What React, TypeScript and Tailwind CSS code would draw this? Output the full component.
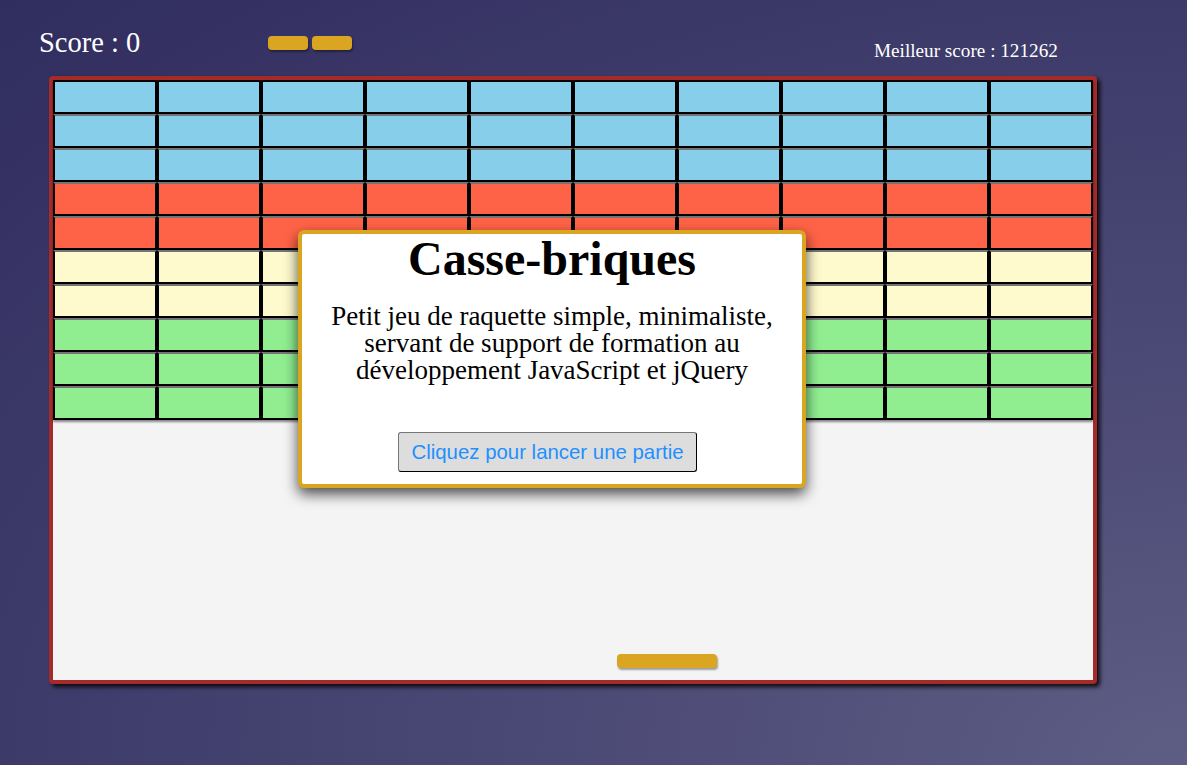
const rowColors = [
  "bg-[#87ceeb]",
  "bg-[#87ceeb]",
  "bg-[#87ceeb]",
  "bg-[#ff6347]",
  "bg-[#ff6347]",
  "bg-[#fffacd]",
  "bg-[#fffacd]",
  "bg-[#90ee90]",
  "bg-[#90ee90]",
  "bg-[#90ee90]",
];

const serif = "font-['Liberation_Serif','Times_New_Roman',serif]";

function Brick({ color, first }: { color: string; first: boolean }) {
  return (
    <div
      className={`h-[34px] w-[104px] border-2 border-black ${color} ${
        first ? "" : "border-t-[#747474]"
      }`}
    />
  );
}

function Life() {
  return <div className="h-[14px] w-[40px] rounded-[4px] bg-[#daa520] shadow-[1px_2px_2px_rgba(0,0,0,0.35)]" />;
}

export default function App() {
  return (
    <div
      className={`min-h-screen w-full overflow-hidden bg-[radial-gradient(ellipse_at_100%_100%,#5e5d84_0%,#4a4874_40%,#302d5f_100%)] text-white ${serif}`}
    >
      {/* Header */}
      <div className="flex h-[76px] items-start">
        <div className="ml-[39px] mt-[29px] w-[229px] whitespace-nowrap text-[28.5px] leading-[28px]">
          Score : 0
        </div>
        <div className="mt-[36px] flex gap-[4px]">
          <Life />
          <Life />
        </div>
        <div className="ml-[522px] mt-[41px] whitespace-nowrap text-[19.2px] leading-[19px]">
          Meilleur score : 121262
        </div>
      </div>

      {/* Game board */}
      <div className="relative ml-[49px] h-[608px] w-[1048px] rounded-[4px] border-4 border-[#a52a2a] bg-[#f4f4f4] shadow-[3px_3px_4px_rgba(0,0,0,0.85)]">
        <div className="flex flex-col shadow-[0_2px_2px_rgba(0,0,0,0.45)]">
          {rowColors.map((color, r) => (
            <div key={r} className="flex">
              {Array.from({ length: 10 }).map((_, c) => (
                <Brick key={c} color={color} first={r === 0} />
              ))}
            </div>
          ))}
        </div>

        {/* Paddle */}
        <div className="absolute left-[564px] top-[574px] h-[14px] w-[100px] rounded-[4px] bg-[#daa520] shadow-[1px_2px_2px_rgba(0,0,0,0.35)]" />

        {/* Start dialog */}
        <div className="absolute left-[245px] top-[150px] flex h-[258px] w-[508px] flex-col items-center rounded-[6px] border-4 border-[#daa520] bg-white px-5 text-black shadow-[0_6px_14px_rgba(0,0,0,0.7)]">
          <h1 className="text-[48px] font-bold leading-[50px]">Casse-briques</h1>
          <p className="mt-[19px] text-center text-[27px] leading-[27px]">
            Petit jeu de raquette simple, minimaliste, servant de support de formation au développement JavaScript et
            jQuery
          </p>
          <button className="mr-[9px] mt-[48px] h-[40px] rounded-[3px] border border-[#767676] border-b-black border-r-black bg-[#dddddd] px-3 font-['Liberation_Sans',Arial,sans-serif] text-[20.4px] text-[#1e90ff]">
            Cliquez pour lancer une partie
          </button>
        </div>
      </div>
    </div>
  );
}
